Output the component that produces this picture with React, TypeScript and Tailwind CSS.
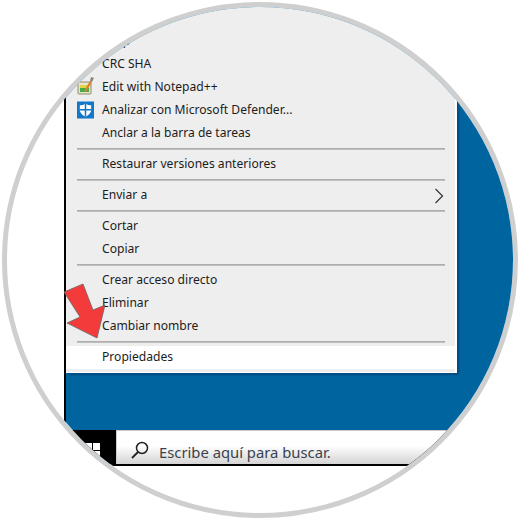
const rows1 = ["7-Zip", "CRC SHA", "Edit with Notepad++", "Analizar con Microsoft Defender...", "Anclar a la barra de tareas"];

function NotepadIcon() {
  return (
    <svg width="18" height="20" viewBox="0 0 18 20" className="absolute left-[11px] top-[0px]">
      <rect x="1" y="6" width="13" height="12" rx="1" fill="#e8e4c8" stroke="#8a8a70" />
      <rect x="3" y="9" width="9" height="3" fill="#e3d34a" />
      <rect x="3" y="12" width="9" height="4" fill="#3fae49" />
      <path d="M7 15 L13 5 L15 6 L9 16 Z" fill="#d9822b" />
      <path d="M13 5 L14 1 L17 2 L15 6 Z" fill="#8f8578" />
    </svg>
  );
}

function ShieldIcon() {
  return (
    <svg width="17" height="18" viewBox="0 0 18 18" className="absolute left-[11px] top-[2px]">
      <rect width="18" height="18" fill="#0f78c8" />
      <path d="M9 2 C7 3.500 5 4 3 4 V9 C3 12 6 15 9 16 C12 15 15 12 15 9 V4 C13 4 11 3.500 9 2 Z" fill="#fff" />
      <path d="M8.200 2 H9.800 V16 H8.200 Z M3 8 H15 V9.600 H3 Z" fill="#0f78c8" />
    </svg>
  );
}

function Row({ label, icon, arrow }: { label: string; icon?: React.ReactNode; arrow?: boolean }) {
  return (
    <div className="relative h-[23px] pl-[36px] flex items-center text-[12.1px] text-[#1c1c1c]">
      {icon}
      <span>{label}</span>
      {arrow && (
        <svg width="10" height="16" viewBox="0 0 10 16" className="absolute right-[11px] top-[4px]">
          <path d="M1.500 1 L8.500 8 L1.500 15" fill="none" stroke="#3d3d3d" strokeWidth="1.300" />
        </svg>
      )}
    </div>
  );
}

function Sep() {
  return <div className="h-[2px] my-[3px] ml-[11px] mr-[10px] bg-gradient-to-b from-[#a4a4a4] to-[#c8c8c8]" />;
}

export default function App() {
  return (
    <div className="w-[520px] h-[520px] bg-white flex items-center justify-center" style={{ fontFamily: '"Noto Sans", sans-serif' }}>
      <div className="relative w-[516px] h-[516px] rounded-full border-[5px] border-[#cfcfcf] overflow-hidden bg-white">
        <div className="ml-[57px] h-[459px] border-b-2 border-black flex flex-col">
          <div className="flex-1 border-l-2 border-black bg-[#00659e] flex flex-col">
            <div className="w-[391px] h-[366px] bg-[#eeeeee] border-r-2 border-b border-white shadow-[2px_2px_2px_#004a80] pt-[23px] flex flex-col">
              {rows1.map((r, i) => (
                <Row key={r} label={r} icon={i === 2 ? <NotepadIcon /> : i === 3 ? <ShieldIcon /> : undefined} />
              ))}
              <Sep />
              <Row label="Restaurar versiones anteriores" />
              <Sep />
              <Row label="Enviar a" arrow />
              <Sep />
              <Row label="Cortar" />
              <Row label="Copiar" />
              <Sep />
              <Row label="Crear acceso directo" />
              <Row label="Eliminar" />
              <Row label="Cambiar nombre" />
              <Sep />
              <div className="bg-white">
                <Row label="Propiedades" />
              </div>
            </div>
            <div className="flex-1" />
            <div className="h-[34px] flex bg-black">
              <div className="w-[50px] pl-[18px] pt-[13px]">
                <div className="grid grid-cols-2 gap-[1px] w-[16px]">
                  <div className="h-[7px] bg-white" />
                  <div className="h-[7px] bg-white" />
                  <div className="h-[7px] bg-white" />
                  <div className="h-[7px] bg-white" />
                </div>
              </div>
              <div className="flex-1 flex items-center pl-[13px] gap-[9px] border-t border-l border-[#cccccc] bg-gradient-to-b from-white from-45% to-[#d4d4d4] text-[14.8px] text-[#3a434d]">
                <svg width="20" height="20" viewBox="0 0 20 20" className="mt-[5px]">
                  <circle cx="12" cy="8" r="5.500" fill="none" stroke="#222" strokeWidth="1.500" />
                  <path d="M8 12 L2 18" stroke="#222" strokeWidth="1.800" />
                </svg>
                <span className="mt-[9px]">Escribe aquí para buscar.</span>
              </div>
            </div>
          </div>
        </div>
        <svg width="50" height="60" viewBox="0 0 50 60" className="absolute left-[53px] top-[273px]">
          <path d="M4 12 L23 4 L33 30 L45 25 L37 58 L7 43 L20 37 Z" fill="#f43b3b" stroke="#666" strokeWidth="0.800" />
        </svg>
      </div>
    </div>
  );
}
